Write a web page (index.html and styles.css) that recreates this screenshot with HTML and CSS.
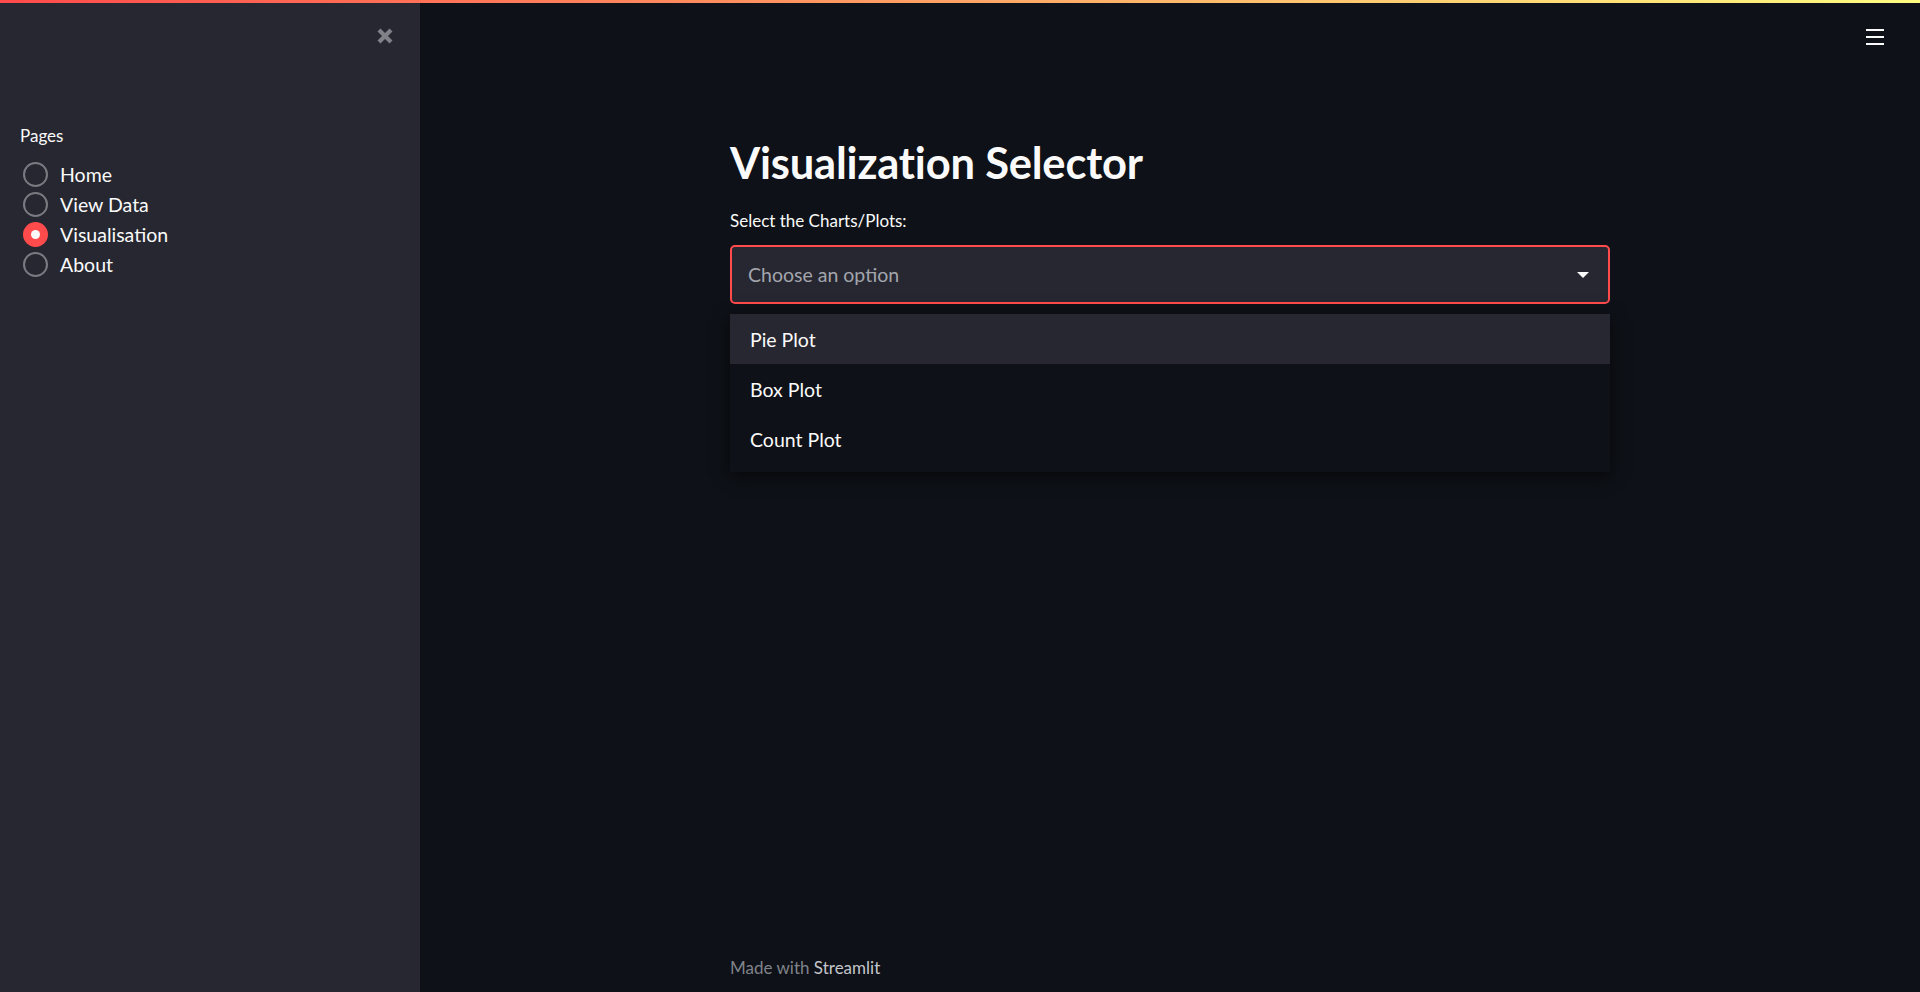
FILE: index.html
```html
<!DOCTYPE html>
<html lang="en">
<head>
    <meta charset="UTF-8">
    <meta name="viewport" content="width=device-width, initial-scale=1.0">
    <title>Visualization Selector</title>
    <link rel="stylesheet" href="styles.css">
</head>
<body>

    <div class="decoration"></div>

    <div class="app">
        <!-- Sidebar -->
        <aside class="sidebar">
            <div class="sidebar-top">
                <button class="close-btn" aria-label="Close sidebar">
                    <svg width="18" height="18" viewBox="0 0 18 18">
                        <path d="M3 3 L15 15 M15 3 L3 15" stroke="#808189" stroke-width="4.2" stroke-linecap="butt"/>
                    </svg>
                </button>
            </div>

            <div class="nav">
                <p class="nav-label">Pages</p>
                <label class="radio"><span class="dot"></span>Home</label>
                <label class="radio"><span class="dot"></span>View Data</label>
                <label class="radio checked"><span class="dot"></span>Visualisation</label>
                <label class="radio"><span class="dot"></span>About</label>
            </div>
        </aside>

        <!-- Main -->
        <main class="main">
            <button class="menu-btn" aria-label="Menu">
                <span></span><span></span><span></span>
            </button>

            <div class="block">
                <h1>Visualization Selector</h1>

                <p class="field-label">Select the Charts/Plots:</p>
                <div class="select">
                    <span class="placeholder">Choose an option</span>
                    <svg class="caret" width="12" height="6" viewBox="0 0 12 6">
                        <path d="M0 0 H12 L6 6 Z" fill="#fafafa"/>
                    </svg>

                    <ul class="menu">
                        <li class="active">Pie Plot</li>
                        <li>Box Plot</li>
                        <li>Count Plot</li>
                    </ul>
                </div>
            </div>

            <footer class="footer">Made with <span>Streamlit</span></footer>
        </main>
    </div>

</body>
</html>
```

FILE: styles.css
```css
/* Streamlit dark theme, 125% scale */
:root {
    --bg: #0e1117;
    --sidebar-bg: #262730;
    --text: #fafafa;
    --primary: #ff4b4b;
    --muted: #808495;
}

* {
    box-sizing: border-box;
}

body {
    margin: 0;
    height: 100vh;
    overflow: hidden;
    background: var(--bg);
    color: var(--text);
    font-family: Lato, "Open Sans", sans-serif;
}

/* top colour strip */
.decoration {
    position: absolute;
    top: 0;
    left: 0;
    right: 0;
    height: 3px;
    background: linear-gradient(90deg, #ff4b4b, #fffd80);
    z-index: 5;
}

.app {
    display: flex;
    height: 100%;
}

/* Sidebar */
.sidebar {
    width: 420px;
    flex-shrink: 0;
    background: var(--sidebar-bg);
    padding: 0 20px;
}

.sidebar-top {
    display: flex;
    justify-content: flex-end;
    padding-top: 27px;
    padding-right: 6px;
    height: 124px;
}

.close-btn {
    background: none;
    border: none;
    padding: 0;
    width: 18px;
    height: 18px;
    cursor: pointer;
}

.close-btn svg {
    display: block;
}

.nav-label {
    margin: 0 0 11px;
    font-size: 17px;
    line-height: 24px;
}

.radio {
    display: flex;
    align-items: center;
    height: 30px;
    font-size: 19.5px;
    cursor: pointer;
}

.dot {
    width: 25px;
    height: 25px;
    border-radius: 50%;
    border: 2.5px solid #7a7b82;
    margin: 0 12px 0 3px;
    flex-shrink: 0;
}

.radio.checked .dot {
    border: none;
    background: var(--primary);
    display: flex;
    align-items: center;
    justify-content: center;
}

.radio.checked .dot::after {
    content: "";
    width: 9px;
    height: 9px;
    border-radius: 50%;
    background: var(--text);
}

/* Main */
.main {
    position: relative;
    flex: 1;
    display: flex;
    flex-direction: column;
    align-items: center;
}

.menu-btn {
    position: absolute;
    top: 29px;
    right: 36px;
    width: 18px;
    height: 16px;
    padding: 0;
    background: none;
    border: none;
    display: flex;
    flex-direction: column;
    justify-content: space-between;
    cursor: pointer;
}

.menu-btn span {
    display: block;
    height: 2px;
    background: var(--text);
}

.block {
    width: 880px;
    padding-top: 136px;
    flex: 1;
}

h1 {
    margin: 0;
    font-size: 43.5px;
    font-weight: 700;
    line-height: 52px;
    letter-spacing: -0.2px;
}

.field-label {
    margin: 22px 0 13px;
    font-size: 17px;
    line-height: 22px;
}

.select {
    position: relative;
    height: 59px;
    border: 2px solid var(--primary);
    border-radius: 5px;
    background: var(--sidebar-bg);
    display: flex;
    align-items: center;
    justify-content: space-between;
    padding: 0 19px 0 16px;
}

.placeholder {
    font-size: 19.5px;
    color: #a3a5ad;
}

.menu {
    position: absolute;
    top: 67px;
    left: -2px;
    right: -2px;
    margin: 0;
    padding: 0 0 8px;
    list-style: none;
    background: #0e1117;
    box-shadow: 0 4px 16px rgba(0, 0, 0, 0.6);
}

.menu li {
    height: 50px;
    display: flex;
    align-items: center;
    padding-left: 20px;
    font-size: 19.5px;
}

.menu li.active {
    background: var(--sidebar-bg);
}

.footer {
    width: 880px;
    padding-bottom: 14px;
    font-size: 17px;
    color: #80838b;
}

.footer span {
    color: #c4c6cc;
}
```
